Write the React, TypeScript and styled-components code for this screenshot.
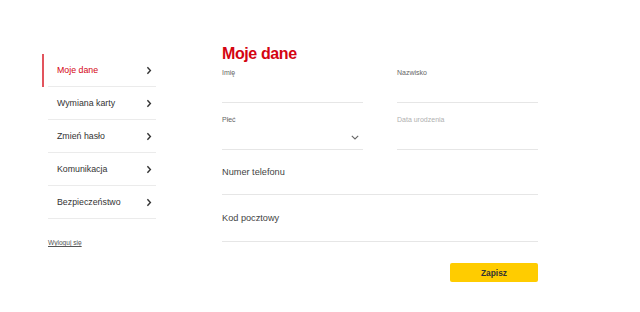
import React from 'react';
import styled, { createGlobalStyle } from 'styled-components';

const GlobalStyle = createGlobalStyle`
  body {
    margin: 0;
    background: #fff;
    font-family: 'Liberation Sans', Arial, sans-serif;
  }
`;

const Page = styled.div`
  display: flex;
  align-items: flex-start;
  width: 640px;
  height: 312px;
  padding: 44px 0 0 42px;
  box-sizing: border-box;
`;

const Sidebar = styled.nav`
  width: 114px;
  margin-top: 10px;
  display: flex;
  flex-direction: column;
`;

const NavList = styled.ul`
  list-style: none;
  margin: 0;
  padding: 0;
`;

const NavItem = styled.li<{ active?: boolean }>`
  position: relative;
  display: flex;
  align-items: center;
  justify-content: space-between;
  height: 32px;
  margin-left: 6px;
  padding: 0 4px 0 9px;
  border-bottom: 1px solid #ebebeb;
  font-size: 8.8px;
  color: ${({ active }) => (active ? '#d40511' : '#333')};

  &::before {
    content: '';
    display: ${({ active }) => (active ? 'block' : 'none')};
    position: absolute;
    left: -6px;
    top: 0;
    bottom: -1px;
    width: 2px;
    background: #e2545d;
  }
`;

const Logout = styled.a`
  margin: 20px 0 0 6px;
  font-size: 6.6px;
  color: #555;
  text-decoration: underline;
`;

const Main = styled.main`
  width: 316px;
  margin-left: 66px;
  display: flex;
  flex-direction: column;
`;

const Title = styled.h1`
  margin: 0;
  font-size: 16px;
  line-height: 20px;
  font-weight: 700;
  letter-spacing: -0.4px;
  color: #d40511;
`;

const Grid = styled.div`
  display: grid;
  grid-template-columns: 141px 141px;
  column-gap: 34px;
  row-gap: 12px;
  margin-top: 4px;
`;

const Field = styled.div`
  display: flex;
  flex-direction: column;
  border-bottom: 1px solid #e6e6e6;
`;

const SmallLabel = styled.label<{ muted?: boolean }>`
  font-size: 7px;
  line-height: 10px;
  color: ${({ muted }) => (muted ? '#b0b0b0' : '#666')};
`;

const InputArea = styled.div`
  height: 24px;
  display: flex;
  align-items: center;
  justify-content: flex-end;
  padding-right: 4px;
`;

const WideField = styled.div<{ h: number }>`
  display: flex;
  align-items: center;
  height: ${({ h }) => h}px;
  border-bottom: 1px solid #e6e6e6;
  font-size: 9.2px;
  color: #444;
`;

const Actions = styled.div`
  display: flex;
  justify-content: flex-end;
  margin-top: 21px;
`;

const SaveButton = styled.button`
  width: 88px;
  height: 19px;
  border: none;
  border-radius: 2px;
  background: #ffcc00;
  font-family: 'Liberation Sans', Arial, sans-serif;
  font-size: 8.4px;
  font-weight: 700;
  color: #333;
  cursor: pointer;
`;

const Chevron = () => (
  <svg width="6" height="9" viewBox="0 0 6 9">
    <path d="M1.4 1.3 L4.4 4.5 L1.4 7.7" fill="none" stroke="#333" strokeWidth="1.4" />
  </svg>
);

const ChevronDown = () => (
  <svg width="8" height="5" viewBox="0 0 8 5">
    <path d="M0.8 0.8 L4 4 L7.2 0.8" fill="none" stroke="#666" strokeWidth="1.1" />
  </svg>
);

const navItems = ['Moje dane', 'Wymiana karty', 'Zmień hasło', 'Komunikacja', 'Bezpieczeństwo'];

export default function App() {
  return (
    <>
      <GlobalStyle />
      <Page>
        <Sidebar>
          <NavList>
            {navItems.map((item, i) => (
              <NavItem key={item} active={i === 0}>
                <span>{item}</span>
                <Chevron />
              </NavItem>
            ))}
          </NavList>
          <Logout>Wyloguj się</Logout>
        </Sidebar>
        <Main>
          <Title>Moje dane</Title>
          <Grid>
            <Field>
              <SmallLabel>Imię</SmallLabel>
              <InputArea />
            </Field>
            <Field>
              <SmallLabel>Nazwisko</SmallLabel>
              <InputArea />
            </Field>
            <Field>
              <SmallLabel>Płeć</SmallLabel>
              <InputArea>
                <ChevronDown />
              </InputArea>
            </Field>
            <Field>
              <SmallLabel muted>Data urodzenia</SmallLabel>
              <InputArea />
            </Field>
          </Grid>
          <WideField h={44}>Numer telefonu</WideField>
          <WideField h={46}>Kod pocztowy</WideField>
          <Actions>
            <SaveButton>Zapisz</SaveButton>
          </Actions>
        </Main>
      </Page>
    </>
  );
}
